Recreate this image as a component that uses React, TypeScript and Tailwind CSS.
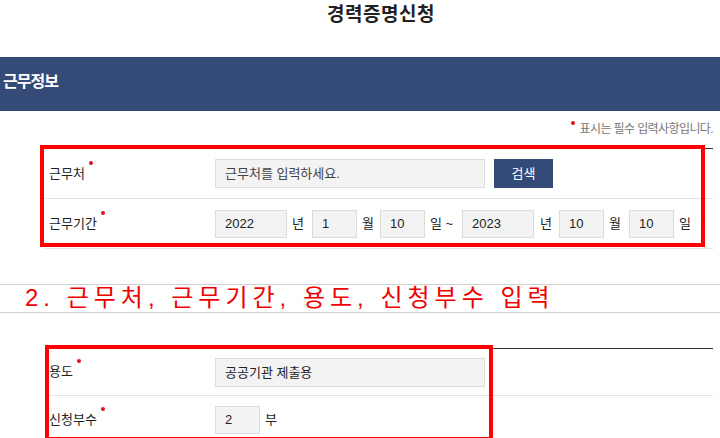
import React from 'react';

const FONT = "font-['Liberation_Sans','Noto_Sans_CJK_KR',sans-serif]";

function Req({ children }: { children: React.ReactNode }) {
  return (
    <span className="relative inline-block leading-[18px]">
      {children}
      <span className="absolute -right-[8px] -top-[4px] h-[4px] w-[4px] rounded-full bg-[#e0101a]" />
    </span>
  );
}

function Field({ value, w }: { value: string; w: string }) {
  return (
    <div className={`${w} h-[28px] border border-[#dcdcdc] bg-[#f3f3f3] pl-[9px] text-[13px] leading-[26px] text-[#222]`}>
      {value}
    </div>
  );
}

function Row({ label, children, last, h = 'h-[50px]' }: { label: string; children: React.ReactNode; last?: boolean; h?: string }) {
  return (
    <div className={`flex ${h} items-center ${last ? '' : 'border-b border-[#e3e3e3]'}`}>
      <div className="w-[170px] pl-[4px] text-[13px] text-[#222]">
        <Req>{label}</Req>
      </div>
      <div className="flex items-center text-[13px] text-[#222]">{children}</div>
    </div>
  );
}

export default function App() {
  return (
    <div className={`relative h-[438px] w-[720px] overflow-hidden bg-white ${FONT}`}>
      {/* 타이틀 */}
      <div className="h-[57px] pl-[42px] text-center">
        <h1 className="text-[19px] font-bold leading-[30px] tracking-[0.5px] text-[#222]">경력증명신청</h1>
      </div>

      {/* 섹션 헤더 */}
      <div className="flex h-[54px] items-center bg-[#344b77] pb-[5px] pl-[3px]">
        <h2 className="text-[16px] font-bold tracking-[-1px] text-white">근무정보</h2>
      </div>

      <div className="flex h-[37px] items-start justify-end pr-[7px] pt-[10px]">
        <span className="relative text-[12px] leading-[16px] tracking-[-0.6px] text-[#777]">
          <span className="absolute -left-[9px] top-[0px] h-[4px] w-[4px] rounded-full bg-[#e0101a]" />
          표시는 필수 입력사항입니다.
        </span>
      </div>

      {/* 근무처 / 근무기간 */}
      <div className="relative ml-[45px] w-[668px] border-t border-[#333]">
        <Row label="근무처">
          <div className="h-[29px] w-[270px] border border-[#dcdcdc] bg-[#f3f3f3] pl-[9px] text-[13px] leading-[27px] text-[#444]">
            근무처를 입력하세요.
          </div>
          <button className="ml-[9px] h-[29px] w-[59px] bg-[#344b77] text-[13px] text-white">검색</button>
        </Row>
        <Row label="근무기간">
          <Field value="2022" w="w-[72px]" />
          <span className="ml-[5px] mr-[8px]">년</span>
          <Field value="1" w="w-[45px]" />
          <span className="ml-[5px] mr-[6px]">월</span>
          <Field value="10" w="w-[45px]" />
          <span className="ml-[5px] mr-[9px]">일 ~</span>
          <Field value="2023" w="w-[72px]" />
          <span className="ml-[6px] mr-[7px]">년</span>
          <Field value="10" w="w-[45px]" />
          <span className="ml-[5px] mr-[8px]">월</span>
          <Field value="10" w="w-[45px]" />
          <span className="ml-[5px]">일</span>
        </Row>
        <div className="pointer-events-none absolute -left-[5px] -top-[4px] h-[102px] w-[665px] border-4 border-[#ff0000]" />
      </div>

      {/* 안내 문구 */}
      <div className="mt-[35px] h-[29px] border-y border-[#d0d0d0] pl-[25px] text-[24px] leading-[26px] tracking-[5px] text-[#f20000]">
        2. 근무처, 근무기간, 용도, 신청부수 입력
      </div>

      {/* 용도 / 신청부수 */}
      <div className="relative ml-[45px] mt-[35px] w-[668px] border-t border-[#333]">
        <Row label="용도" h="h-[47px]">
          <div className="h-[29px] w-[270px] border border-[#dcdcdc] bg-[#f3f3f3] pl-[9px] text-[13px] leading-[27px] text-[#222]">
            공공기관 제출용
          </div>
        </Row>
        <Row label="신청부수" h="h-[47px]" last>
          <Field value="2" w="w-[45px]" />
          <span className="ml-[5px]">부</span>
        </Row>
        <div className="pointer-events-none absolute left-0 -top-[4px] h-[96px] w-[448px] border-4 border-[#ff0000]" />
      </div>
    </div>
  );
}
